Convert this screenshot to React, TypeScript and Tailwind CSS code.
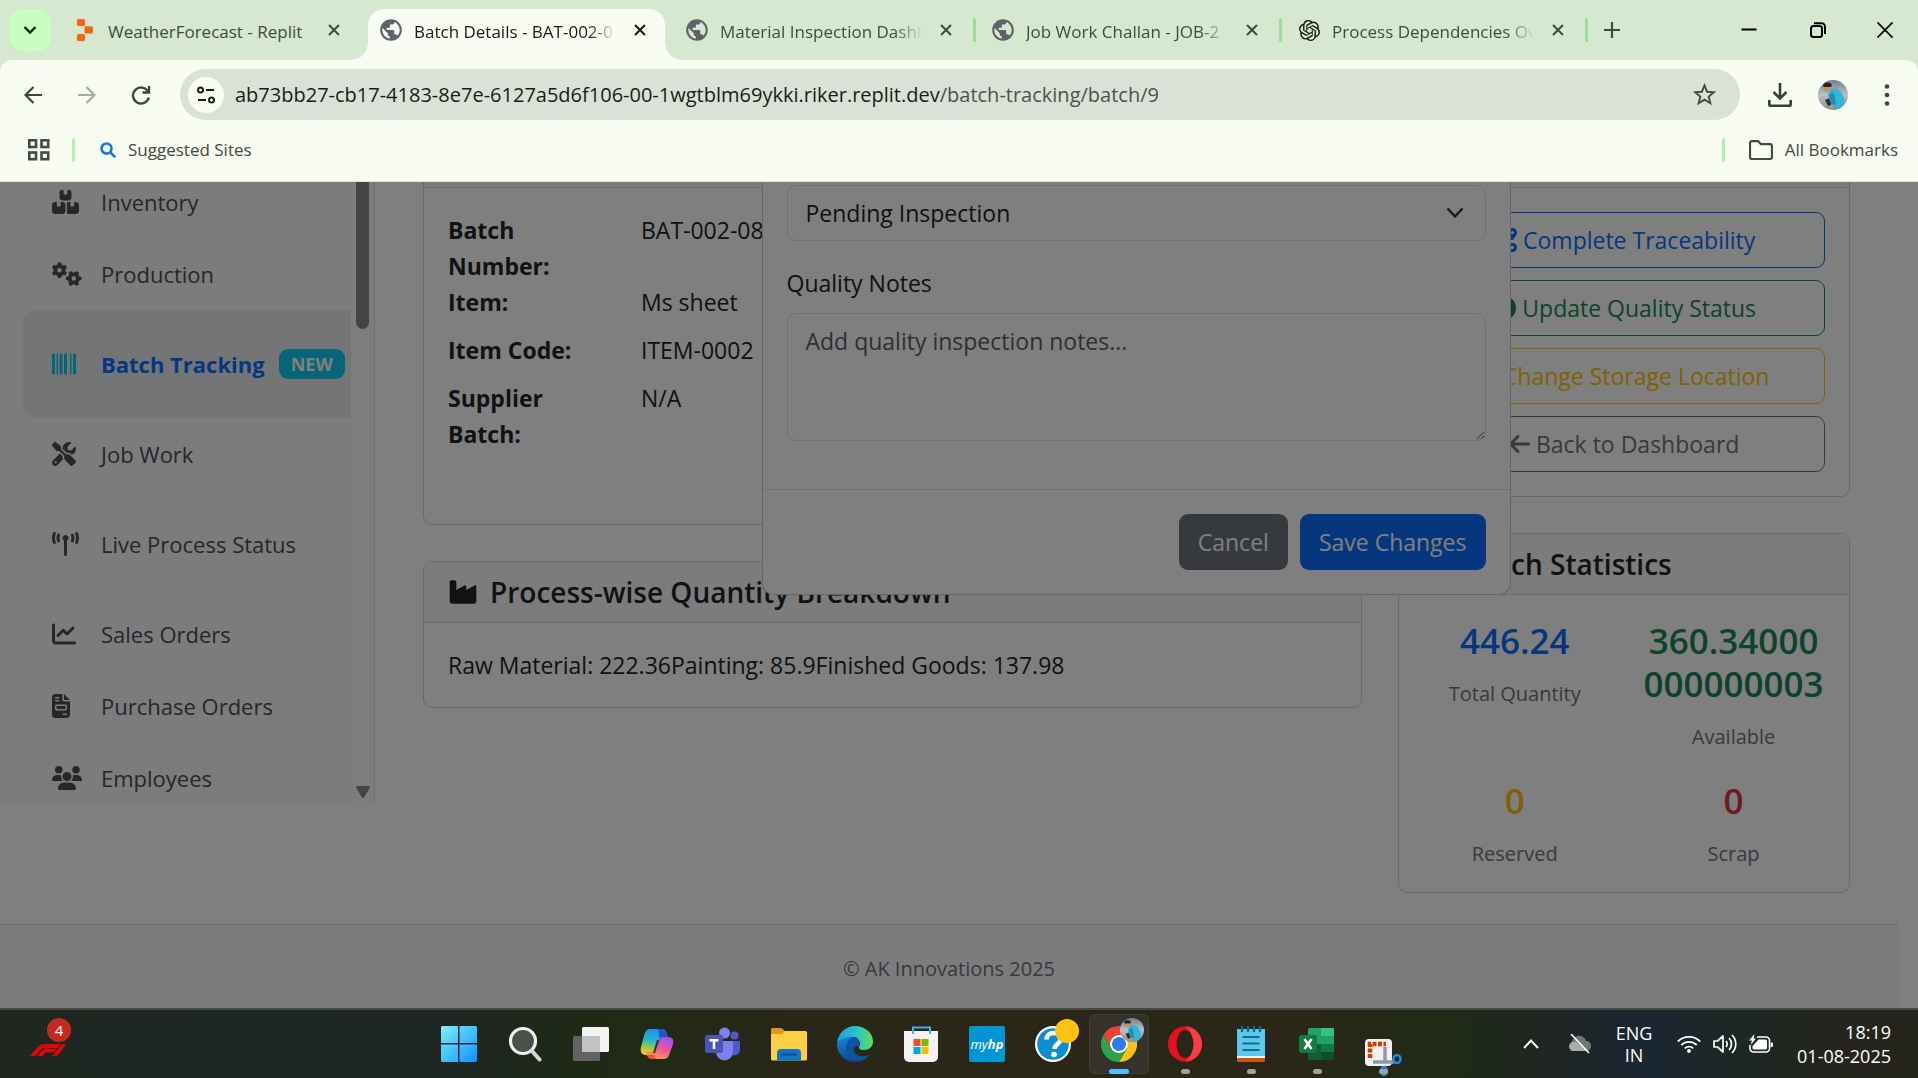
import React from "react";
import {
  FaBoxesStacked,
  FaGears,
  FaBarcode,
  FaScrewdriverWrench,
  FaTowerBroadcast,
  FaChartLine,
  FaFileInvoice,
  FaUsers,
  FaIndustry,
  FaRoute,
  FaCircleCheck,
  FaLocationDot,
  FaArrowLeft,
  FaChartPie,
} from "react-icons/fa6";
import { MdPublic } from "react-icons/md";
import { SiOpenai } from "react-icons/si";

type IconType = React.ComponentType<{ className?: string }>;

/* ---------- Browser chrome ---------- */

function ReplitIcon() {
  return (
    <svg viewBox="0 0 16 22" className="h-[22px] w-4" fill="#f8650c">
      <rect x="0" y="0" width="8" height="7" rx="1.5" />
      <rect x="7.5" y="7.3" width="8.5" height="7.2" rx="1.5" />
      <rect x="0" y="15" width="8" height="7" rx="1.5" />
    </svg>
  );
}

function CrossIcon() {
  return (
    <svg viewBox="0 0 12 12" className="size-3" stroke="currentColor" strokeWidth="2" fill="none">
      <path d="M1 1 11 11M11 1 1 11" />
    </svg>
  );
}

const tabs = [
  { title: "WeatherForecast - Replit", icon: "replit", active: false, divider: false, fade: false },
  { title: "Batch Details - BAT-002-0", icon: "globe", active: true, divider: false, fade: true },
  { title: "Material Inspection Dashb", icon: "globe", active: false, divider: true, fade: true },
  { title: "Job Work Challan - JOB-2", icon: "globe", active: false, divider: true, fade: true },
  { title: "Process Dependencies Ov", icon: "openai", active: false, divider: true, fade: true },
];

function TabStrip() {
  return (
    <div className="flex h-[60px] shrink-0 items-start bg-[#d6e8d0]">
      <button aria-label="Search tabs" className="mt-[9px] ml-[9px] mr-[11px] flex size-[42px] shrink-0 items-center justify-center rounded-[14px] bg-[#c8ffc0] text-[#10200f]">
        <svg viewBox="0 0 14 10" className="h-2.5 w-3.5" fill="none" stroke="currentColor" strokeWidth="2.4">
          <path d="M1.5 2 7 7.5 12.5 2" />
        </svg>
      </button>
      {tabs.map((t) => (
        <div key={t.title} className="relative h-[60px] w-[306px]">
          {t.active && (
            <>
              <div className="absolute top-[9px] bottom-0 left-0 w-[297px] rounded-t-[16px] bg-[#f8fcf2]" />
              <div className="absolute bottom-0 -left-4 size-4 bg-[radial-gradient(circle_at_0_0,transparent_15px,#f8fcf2_16px)]" />
              <div className="absolute bottom-0 left-[297px] size-4 bg-[radial-gradient(circle_at_100%_0,transparent_15px,#f8fcf2_16px)]" />
            </>
          )}
          <div className={t.active ? "relative flex h-[60px] items-center pl-2.5 text-[#171d16]" : "relative flex h-[60px] items-center pl-2.5 text-[#3e4d3b]"}>
            <span className="mr-2.5 flex w-[26px] justify-center text-[#5f6368]">
              {t.icon === "replit" && <ReplitIcon />}
              {t.icon === "globe" && <MdPublic className="size-[26px]" />}
              {t.icon === "openai" && <SiOpenai className="size-[21px] text-[#101410]" />}
            </span>
            <span
              className={
                t.fade
                  ? "w-[202px] overflow-hidden pt-1 text-[17px] leading-6 whitespace-nowrap [mask-image:linear-gradient(to_right,black_86%,transparent)]"
                  : "w-[202px] overflow-hidden pt-1 text-[17px] leading-6 whitespace-nowrap"
              }
            >
              {t.title}
            </span>
            <button aria-label={"Close " + t.title} className="ml-3.5 flex size-5 items-center justify-center">
              <CrossIcon />
            </button>
            {t.divider && <span className="ml-auto mr-1 h-6 w-[3px] rounded bg-[#9cdc96]" />}
          </div>
        </div>
      ))}
      <button aria-label="New tab" className="ml-1 flex h-[60px] w-8 shrink-0 items-center justify-center text-[#3c4c39]">
        <svg viewBox="0 0 16 16" className="size-4" stroke="currentColor" strokeWidth="2.2">
          <path d="M8 0v16M0 8h16" />
        </svg>
      </button>
      <div className="ml-auto flex h-[60px] items-center text-black">
        <button aria-label="Minimize" className="flex w-[69px] justify-center">
          <svg viewBox="0 0 16 16" className="size-4" stroke="currentColor" strokeWidth="2">
            <path d="M0.500 7.500h15" />
          </svg>
        </button>
        <button aria-label="Restore" className="flex w-[69px] justify-center">
          <svg viewBox="0 0 16 16" className="size-4" stroke="currentColor" strokeWidth="2" fill="none">
            <rect x="1" y="4" width="11" height="11" rx="2.5" />
            <path d="M4 1.200h7.500a3.500 3.500 0 0 1 3.500 3.500V12" />
          </svg>
        </button>
        <button aria-label="Close window" className="flex w-[66px] justify-center">
          <svg viewBox="0 0 16 16" className="size-4" stroke="currentColor" strokeWidth="1.800">
            <path d="M0.500 0.500 15.500 15.500M15.500 0.500 0.500 15.500" />
          </svg>
        </button>
      </div>
    </div>
  );
}

function Avatar({ className }: { className: string }) {
  return (
    <svg viewBox="0 0 30 30" className={className}>
      <defs>
        <clipPath id="avatar-clip">
          <circle cx="15" cy="15" r="15" />
        </clipPath>
        <linearGradient id="avatar-sky" x1="0" y1="0" x2="0" y2="1">
          <stop offset="0" stopColor="#6f7d8d" />
          <stop offset="0.5" stopColor="#b9c0ca" />
          <stop offset="1" stopColor="#8e8a8c" />
        </linearGradient>
      </defs>
      <g clipPath="url(#avatar-clip)">
        <rect width="30" height="30" fill="url(#avatar-sky)" />
        <path d="M7 20 14 17l2 7-6 2Z" fill="#2b2e38" />
        <path d="M12 9c7-2 12 3 14 9 1 6-1 9-5 12h-7c1-6-3-9-4-15Z" fill="#2fb6d8" />
        <path d="M14 12c4 4 4 9 3 17l-3 1c1-6-2-10-3-15Z" fill="#1d8fb5" />
        <circle cx="9.500" cy="7.500" r="4.200" fill="#c09072" />
        <path d="M5 6c0-4 8-5 9 0l-2 1H6Z" fill="#2a211d" />
        <path d="m13 24 4 1-1 5h-3Z" fill="#c09072" />
      </g>
    </svg>
  );
}

function Toolbar() {
  return (
    <div className="bg-[#d6e8d0]">
      <div className="flex items-center rounded-t-[12px] bg-[#f8fcf2] pt-[9px] text-[#374a34]">
        <button aria-label="Back" className="ml-[15px] flex w-9 justify-center">
          <svg viewBox="0 0 18 18" className="size-[18px]" fill="none" stroke="currentColor" strokeWidth="2.200">
            <path d="M18 9H1.800M9.500 1 1.500 9l8 8" />
          </svg>
        </button>
        <button aria-label="Forward" className="ml-[18px] flex w-9 justify-center text-[#a3ada0]">
          <svg viewBox="0 0 18 18" className="size-[18px]" fill="none" stroke="currentColor" strokeWidth="2.200">
            <path d="M0 9h16.200M8.500 1l8 8-8 8" />
          </svg>
        </button>
        <button aria-label="Reload" className="ml-[18px] flex w-9 justify-center">
          <svg viewBox="0 0 20 20" className="size-5" fill="none" stroke="currentColor" strokeWidth="2.300">
            <path d="M17.800 12.500A8 8 0 1 1 17 6.500" />
            <path d="M18 1v6.500h-6.500" />
          </svg>
        </button>
        <div className="ml-[21px] flex h-[51px] flex-1 items-center rounded-full bg-[#dae2d7] pl-2">
          <button aria-label="View site information" className="flex size-9 items-center justify-center rounded-full bg-[#f8fcf2] text-[#1a2118]">
            <svg viewBox="0 0 18 18" className="size-[18px]" fill="none" stroke="currentColor" strokeWidth="2">
              <circle cx="3.500" cy="4" r="2.500" />
              <path d="M9 4h8M1 14h8" />
              <circle cx="14.500" cy="14" r="2.500" />
            </svg>
          </button>
          <p className="ml-[11px] flex-1 text-[20px] leading-[30px] text-[#4a5448]">
            <span className="text-[#171d16]">ab73bb27-cb17-4183-8e7e-6127a5d6f106-00-1wgtblm69ykki.riker.replit.dev</span>
            /batch-tracking/batch/9
          </p>
          <button aria-label="Bookmark this tab" className="mr-6 text-[#444d42]">
            <svg viewBox="0 0 24 24" className="size-[23px]" fill="none" stroke="currentColor" strokeWidth="2">
              <path d="m12 2.500 2.700 6.600 7.100.5-5.400 4.600 1.700 6.900L12 17.300l-6.100 3.800 1.700-6.900-5.400-4.600 7.100-.5Z" />
            </svg>
          </button>
        </div>
        <button aria-label="Downloads" className="ml-7 text-[#32452f]">
          <svg viewBox="0 0 24 24" className="size-6" fill="none" stroke="currentColor" strokeWidth="2.600">
            <path d="M12 0v15M5.500 9l6.500 6.500L18.500 9M1.300 17v4.200c0 1 .5 1.500 1.500 1.500h18.400c1 0 1.500-.5 1.500-1.500V17" />
          </svg>
        </button>
        <button aria-label="Profile" className="ml-[26px]">
          <Avatar className="size-[30px]" />
        </button>
        <button aria-label="Menu" className="mr-4 ml-[24px] flex w-[30px] justify-center text-[#374a34]">
          <svg viewBox="0 0 6 22" className="h-[22px] w-1.5" fill="currentColor">
            <circle cx="3" cy="2.500" r="2.300" />
            <circle cx="3" cy="11" r="2.300" />
            <circle cx="3" cy="19.500" r="2.300" />
          </svg>
        </button>
      </div>
    </div>
  );
}

function BookmarksBar() {
  return (
    <div className="flex h-[62px] shrink-0 items-center border-b border-[#dde5d9] bg-[#f8fcf2] pb-0.5 text-[17px] leading-6 text-[#434a41]">
      <button aria-label="Apps" className="ml-7">
        <svg viewBox="0 0 22 22" className="size-[22px]" fill="none" stroke="currentColor" strokeWidth="2.600">
          <rect x="1.300" y="1.300" width="6.700" height="6.700" />
          <rect x="13.500" y="1.300" width="6.700" height="6.700" />
          <rect x="1.300" y="13.500" width="6.700" height="6.700" />
          <rect x="13.500" y="13.500" width="6.700" height="6.700" />
        </svg>
      </button>
      <span className="ml-[22px] h-6 w-[3px] rounded bg-[#b4f0ae]" />
      <a href="#suggested" className="ml-[25px] flex items-center gap-3">
        <svg viewBox="0 0 16 16" className="size-4" fill="none" stroke="#1a78d0" strokeWidth="2.600">
          <circle cx="6.500" cy="6.500" r="5" />
          <path d="m10.200 10.200 5 5" />
        </svg>
        Suggested Sites
      </a>
      <span className="ml-auto h-6 w-[3px] rounded bg-[#b4f0ae]" />
      <button className="mr-5 ml-6 flex items-center gap-3">
        <svg viewBox="0 0 24 20" className="h-5 w-6" fill="none" stroke="currentColor" strokeWidth="2.200">
          <path d="M3 1.200h6l3 3h9a2 2 0 0 1 2 2V17a2 2 0 0 1-2 2H3a2 2 0 0 1-2-2V3.200a2 2 0 0 1 2-2Z" />
        </svg>
        All Bookmarks
      </button>
    </div>
  );
}

/* ---------- Application page ---------- */

const navItems: { label: string; icon: IconType; size: string; tall?: boolean; active?: boolean }[] = [
  { label: "Inventory", icon: FaBoxesStacked, size: "h-6 w-[27px]" },
  { label: "Production", icon: FaGears, size: "h-6 w-[30px]" },
  { label: "Batch Tracking", icon: FaBarcode, size: "size-6 text-[#0dcaf0]", tall: true, active: true },
  { label: "Job Work", icon: FaScrewdriverWrench, size: "size-6" },
  { label: "Live Process Status", icon: FaTowerBroadcast, size: "h-6 w-[27px]", tall: true },
  { label: "Sales Orders", icon: FaChartLine, size: "size-6" },
  { label: "Purchase Orders", icon: FaFileInvoice, size: "h-6 w-[18px]" },
  { label: "Employees", icon: FaUsers, size: "h-6 w-[30px]" },
];

function Sidebar() {
  return (
    <aside className="flex h-[621px] w-[375px] shrink-0 overflow-hidden border-r border-[#dee2e6] bg-[#fbfbfb]">
      <nav className="flex-1 bg-[#f8f9fa] pl-[23px]">
        <ul className="-mt-4">
          {navItems.map(({ label, icon: Icon, size, tall, active }) => (
            <li key={label}>
              <a
                href={"#" + label.toLowerCase().replace(/ /g, "-")}
                className={
                  active
                    ? "flex h-[108px] items-center rounded-l-[12px] bg-[#e8eaed] pl-[29px] font-bold text-[#0d6efd]"
                    : tall
                      ? "flex h-[108px] items-center pl-[29px] text-[#495057]"
                      : "flex h-[72px] items-center pl-[29px] text-[#495057]"
                }
              >
                <span className="w-[49px] shrink-0">
                  <Icon className={size} />
                </span>
                <span className="whitespace-nowrap">{label}</span>
                {active && (
                  <span className="ml-3.5 rounded-[9px] bg-[#0dcaf0] px-3 text-[18px] leading-[30px] font-bold text-white">NEW</span>
                )}
              </a>
            </li>
          ))}
        </ul>
      </nav>
      <div className="flex w-[23px] flex-col items-center">
        <div className="h-[147px] w-[13px] rounded-b-full bg-[#888888]" />
        <svg viewBox="0 0 14 12" className="mt-auto mb-[5px] h-3 w-3.5" fill="#888888">
          <path d="M1.500 0h11c1.300 0 1.800 1 1.200 2L8.300 11c-.7 1.200-1.900 1.200-2.600 0L.3 2C-.3 1 .2 0 1.500 0Z" />
        </svg>
      </div>
    </aside>
  );
}

const details = [
  ["Batch Number:", "BAT-002-08"],
  ["Item:", "Ms sheet"],
  ["Item Code:", "ITEM-0002"],
  ["Supplier Batch:", "N/A"],
];

function BatchInfoCard() {
  return (
    <section className="h-[343px] rounded-b-[9px] border border-t-0 border-[#d3d3d3]">
      <div className="h-[6px] border-b border-[#d3d3d3] bg-[#f8f8f8]" />
      <dl className="w-1/2 px-6 pt-6">
        {details.map(([k, v]) => (
          <div key={k} className="flex">
            <dt className="w-[193px] shrink-0 pr-9 font-bold">{k}</dt>
            <dd className="mb-3 whitespace-nowrap">{v}</dd>
          </div>
        ))}
      </dl>
    </section>
  );
}

function CardHeader({ icon: Icon, children }: { icon: IconType; children: React.ReactNode }) {
  return (
    <h2 className="flex items-center gap-3 rounded-t-[8px] border-b border-[#d3d3d3] bg-[#f8f8f8] px-6 py-3 text-[28px] leading-9 font-semibold">
      <Icon className="size-[30px]" />
      {children}
    </h2>
  );
}

function ProcessCard() {
  return (
    <section className="mt-9 rounded-[9px] border border-[#d3d3d3]">
      <CardHeader icon={FaIndustry}>Process-wise Quantity Breakdown</CardHeader>
      <p className="p-6">Raw Material: 222.36Painting: 85.9Finished Goods: 137.98</p>
    </section>
  );
}

const actions: { label: string; icon: IconType; size: string; style: string }[] = [
  { label: "Complete Traceability", icon: FaRoute, size: "size-6", style: "border-[#0d6efd] text-[#0d6efd]" },
  { label: "Update Quality Status", icon: FaCircleCheck, size: "size-6", style: "border-[#198754] text-[#198754]" },
  { label: "Change Storage Location", icon: FaLocationDot, size: "h-6 w-[18px]", style: "border-[#ffc107] text-[#ffc107]" },
  { label: "Back to Dashboard", icon: FaArrowLeft, size: "h-6 w-[21px]", style: "border-[#6c757d] text-[#6c757d]" },
];

function ActionsCard() {
  return (
    <section className="rounded-b-[9px] border border-t-0 border-[#d3d3d3]">
      <div className="h-[6px] border-b border-[#d3d3d3] bg-[#f8f8f8]" />
      <div className="flex flex-col gap-3 p-6">
        {actions.map(({ label, icon: Icon, size, style }) => (
          <button key={label} className={"flex h-14 items-center justify-center gap-1.5 rounded-[9px] border " + style}>
            <Icon className={size} />
            {label}
          </button>
        ))}
      </div>
    </section>
  );
}

const stats = [
  { value: "446.24", label: "Total Quantity", style: "text-[#0d6efd]" },
  { value: "360.34000000000003", label: "Available", style: "text-[#198754]" },
  { value: "0", label: "Reserved", style: "text-[#ffc107]" },
  { value: "0", label: "Scrap", style: "text-[#dc3545]" },
];

function StatsCard() {
  return (
    <section className="mt-9 rounded-[9px] border border-[#d3d3d3]">
      <CardHeader icon={FaChartPie}>Batch Statistics</CardHeader>
      <div className="grid grid-cols-2 gap-x-9 gap-y-6 px-6 pt-6 pb-5 text-center">
        {stats.map((s) => (
          <div key={s.label} className="min-w-0">
            <p className={"mb-3.5 text-[35px] leading-[43px] font-semibold break-words " + s.style}>{s.value}</p>
            <p className="text-[20px] leading-9 text-[#6c757d]">{s.label}</p>
          </div>
        ))}
      </div>
    </section>
  );
}

function QualityModal() {
  return (
    <div role="dialog" aria-label="Update Quality Status" className="mr-px w-[749px] rounded-b-[12px] border border-t-0 border-[#cccccc] bg-white">
      <form className="px-6 pt-[3px] pb-12" onSubmit={(e) => e.preventDefault()}>
        <div className="relative">
          <select aria-label="Quality Status" className="h-14 w-full appearance-none rounded-[9px] border border-[#dee2e6] bg-white px-[18px]">
            <option>Pending Inspection</option>
          </select>
          <svg viewBox="0 0 18 12" className="pointer-events-none absolute top-[22px] right-[22px] h-3 w-[18px]" fill="none" stroke="#343a40" strokeWidth="2.500">
            <path d="m1.500 1.500 7.500 8 7.500-8" />
          </svg>
        </div>
        <label htmlFor="notes" className="mt-6 mb-3 block">
          Quality Notes
        </label>
        <textarea
          id="notes"
          placeholder="Add quality inspection notes..."
          className="block h-32 w-full rounded-[9px] border border-[#dee2e6] bg-white px-[18px] py-[9px] placeholder:text-[#5c6166]"
        />
      </form>
      <div className="flex justify-end gap-3 border-t border-[#dee2e6] p-6 text-white">
        <button className="h-14 rounded-[9px] bg-[#6c757d] px-[19px]">Cancel</button>
        <button className="h-14 rounded-[9px] bg-[#0d6efd] px-[19px]">Save Changes</button>
      </div>
    </div>
  );
}

function AppPage() {
  return (
    <div className="relative min-h-0 flex-1 overflow-hidden bg-white pr-5 text-[22px] leading-9 text-[#212529]">
      <div className="flex min-h-[742px]">
        <Sidebar />
        <main className="relative min-w-0 flex-1 px-12 text-[23px]">
          <div className="-mx-[18px] flex">
            <div className="w-2/3 px-[18px]">
              <BatchInfoCard />
              <ProcessCard />
            </div>
            <div className="w-1/3 px-[18px]">
              <ActionsCard />
              <StatsCard />
            </div>
          </div>
          <div className="absolute inset-x-0 top-0 flex justify-center">
            <QualityModal />
          </div>
        </main>
      </div>
      <footer className="h-24 border-t border-[#dee2e6] bg-[#f8f9fa] pt-[26px] text-center text-[20px] text-[#6c757d]">
        © AK Innovations 2025
      </footer>
      <div className="absolute inset-0 bg-black/50" />
    </div>
  );
}

/* ---------- Windows taskbar ---------- */

const box = "size-9";

function StartIcon() {
  return (
    <svg viewBox="0 0 36 36" className={box}>
      <defs>
        <linearGradient id="win" x1="0" y1="0" x2="1" y2="1" >
          <stop offset="0" stopColor="#7df0ff" />
          <stop offset="1" stopColor="#0a93ff" />
        </linearGradient>
      </defs>
      <path fill="url(#win)" d="M1.500 0H17v17H0V1.500A1.500 1.500 0 0 1 1.500 0ZM18.500 0H34.500A1.500 1.500 0 0 1 36 1.500V17H18.500ZM0 18.500H17V36H1.500A1.500 1.500 0 0 1 0 34.500ZM18.500 18.500H36v16a1.500 1.500 0 0 1-1.500 1.500H18.500Z" />
    </svg>
  );
}

function SearchIcon() {
  return (
    <svg viewBox="0 0 36 36" className={box} fill="none">
      <circle cx="16" cy="15" r="12.500" fill="#46524a" stroke="#f1f1f1" strokeWidth="3.200" />
      <path d="m25 25 7.500 8.500" stroke="#d8d8d8" strokeWidth="4" strokeLinecap="round" />
    </svg>
  );
}

function TaskViewIcon() {
  return (
    <svg viewBox="0 0 36 36" className={box}>
      <rect x="0" y="10" width="27" height="25" rx="1.500" fill="#636163" />
      <rect x="9" y="1" width="27" height="25" rx="1.500" fill="#f4f4f4" />
      <path d="M9 10h18v16H10.500A1.500 1.500 0 0 1 9 24.500Z" fill="#c2c2c2" />
    </svg>
  );
}

function CopilotIcon() {
  return (
    <svg viewBox="0 0 36 36" className={box}>
      <defs>
        <linearGradient id="cp-a" x1="0.500" y1="0" x2="0.300" y2="1">
          <stop offset="0" stopColor="#1d8df0" />
          <stop offset="0.450" stopColor="#27b6c8" />
          <stop offset="0.750" stopColor="#a8c83a" />
          <stop offset="1" stopColor="#ffc52b" />
        </linearGradient>
        <linearGradient id="cp-b" x1="0.700" y1="0" x2="0.300" y2="1">
          <stop offset="0" stopColor="#a24df0" />
          <stop offset="0.500" stopColor="#e8599c" />
          <stop offset="1" stopColor="#ff9a4a" />
        </linearGradient>
      </defs>
      <path d="M11 3h12c3 0 4 2 5 5l1 4h-5c-3 0-4 1-5 4l-3 9c-1 3-2 4-5 4H7c-5 0-6-4-5-8L5.500 8C6.500 5 8 3 11 3Z" fill="url(#cp-a)" />
      <path d="M19 3h4c3 0 4 2 5 5l1 4h-6c-3 0-3-1-3-4s-.5-4-1-5Z" fill="#1c56c8" />
      <path d="M25 33H13c-3 0-4-2-5-4l-1-3h5c3 0 4-1 5-4l3-7c1-3 2-4 5-4h4c5 0 6 3 5 7l-3.500 10C29.500 31 28 33 25 33Z" fill="url(#cp-b)" />
      <path d="M17 33h-4c-3 0-4-2-5-4H12c3 0 4 0 4 2Z" fill="#f2512b" />
      <path d="m20 14-4 13h-2l4-13Z" fill="#3b2a4a" />
    </svg>
  );
}

function TeamsIcon() {
  return (
    <svg viewBox="0 0 36 36" className={box}>
      <circle cx="29.500" cy="9.500" r="4" fill="#5059c9" />
      <path d="M25 15h10v9a5.500 5.500 0 0 1-10 3Z" fill="#5059c9" />
      <circle cx="19.500" cy="7" r="5.500" fill="#7b83eb" />
      <path d="M11 15h17v11a8.500 8.500 0 0 1-17 0Z" fill="#7b83eb" />
      <rect x="0" y="9" width="18" height="18" rx="2" fill="#4b53bc" />
      <path d="M4.500 13h9v2.500h-3.200V23H7.700v-7.500H4.500Z" fill="#fff" />
    </svg>
  );
}

function ExplorerIcon() {
  return (
    <svg viewBox="0 0 36 36" className={box}>
      <path d="M1.500 2h9l4 3.500V14H0V3.500A1.500 1.500 0 0 1 1.500 2Z" fill="#dd9a0c" />
      <path d="M14 5h20.500A1.500 1.500 0 0 1 36 6.500V33a1.500 1.500 0 0 1-1.500 1.500h-33A1.500 1.500 0 0 1 0 33V8h11Z" fill="#ffcf45" />
      <path d="M6 34.500V27a4 4 0 0 1 4-4h16a4 4 0 0 1 4 4v7.500Z" fill="#0f75c8" />
      <path d="M11 28.500h14" stroke="#0a4a88" strokeWidth="2" strokeLinecap="round" />
    </svg>
  );
}

function EdgeIcon() {
  return (
    <svg viewBox="0 0 36 36" className={box}>
      <defs>
        <linearGradient id="edge-a" x1="0" y1="0.500" x2="1" y2="0.500">
          <stop offset="0" stopColor="#1e9de0" />
          <stop offset="0.550" stopColor="#2cc3c8" />
          <stop offset="1" stopColor="#62e050" />
        </linearGradient>
        <linearGradient id="edge-b" x1="0" y1="0" x2="0.600" y2="1">
          <stop offset="0" stopColor="#1a86dc" />
          <stop offset="1" stopColor="#0c3f8a" />
        </linearGradient>
      </defs>
      <path d="M0 18a18 18 0 0 0 18 18c6 0 11-2.500 14.500-7-8 4-16 1-17-6-.5-4 1-7 4-9C12 8 2 10 0 18Z" fill="url(#edge-b)" />
      <path d="M0 17C1 7 9 0 18 0c10 0 18 7 18 15.500C36 21 32 24 27 24c-4 0-6-1.500-5-3 3-5-1-10-7-10S2 13 0 17Z" fill="url(#edge-a)" />
      <path d="M9 22c0-6 4-10 9-11 3 1 5 4 5 7 0 1-.5 2-1 3-2-2-4-1-5 1-1 7 6 10 15.500 7C27 38 9 36 9 22Z" fill="#10539f" />
    </svg>
  );
}

function StoreIcon() {
  return (
    <svg viewBox="0 0 36 36" className={box}>
      <path d="M10 8V1.500h17V8" fill="none" stroke="#34b4f0" strokeWidth="2" />
      <path d="M1 5h34v26a5 5 0 0 1-5 5H6a5 5 0 0 1-5-5Z" fill="#f3f3f3" />
      <path d="M10 8V5M27 8V5" stroke="#34b4f0" strokeWidth="2" />
      <rect x="10.500" y="13" width="7" height="7" fill="#f25022" />
      <rect x="18.500" y="13" width="7" height="7" fill="#7fba00" />
      <rect x="10.500" y="21" width="7" height="7" fill="#00a4ef" />
      <rect x="18.500" y="21" width="7" height="7" fill="#ffb900" />
    </svg>
  );
}

function MyHpIcon() {
  return (
    <span className="flex size-9 items-center justify-center rounded-[2px] bg-[#0096d6] text-[13px] leading-4 text-white italic">
      my<b>hp</b>
    </span>
  );
}

function HelpIcon() {
  return (
    <svg viewBox="0 0 36 36" className="size-9 overflow-visible">
      <circle cx="18" cy="18" r="18" fill="#fff" />
      <circle cx="18" cy="18" r="15.800" fill="#0b8fd2" />
      <path d="M11.500 13.500c0-4 3-6.500 7-6.500s7 2.500 7 6c0 5-6 5-6 10" fill="none" stroke="#fff" strokeWidth="4.500" />
      <circle cx="19" cy="28.500" r="2.800" fill="#fff" />
      <circle cx="32" cy="5" r="12" fill="#ffc20e" />
    </svg>
  );
}

function ChromeIcon() {
  return (
    <svg viewBox="0 0 36 36" className={box}>
      <path d="M18 9h15.600a18 18 0 0 1-15.600 27l7.800-13.500Z" fill="#fbc116" />
      <path d="M18 9h15.600A18 18 0 0 0 2.400 9l7.800 13.500Z" fill="#ea4335" />
      <path d="M2.400 9A18 18 0 0 0 18 36l7.800-13.500H10.200Z" fill="#2fa24c" />
      <circle cx="18" cy="18" r="9" fill="#fff" />
      <circle cx="18" cy="18" r="7" fill="#2b7de9" />
    </svg>
  );
}

function OperaIcon() {
  return (
    <svg viewBox="0 0 36 36" className={box}>
      <ellipse cx="18" cy="18" rx="17" ry="17.500" fill="#e8101f" />
      <path d="M18 0.500c9.400 0 17 7.800 17 17.500s-7.600 17.500-17 17.500c4.500-2 8-9 8-17.500S22.500 2.500 18 .5Z" fill="#fb3a44" />
      <ellipse cx="18" cy="18" rx="8.500" ry="14" fill="#2a2718" />
    </svg>
  );
}

function NotepadIcon() {
  return (
    <svg viewBox="0 0 36 36" className={box}>
      <rect x="4" y="30" width="28" height="6" rx="1.500" fill="#c8590f" />
      <path d="M4 4h28v28H4Z" fill="#f2f2f2" />
      <path d="M4 3h28v27H4Z" fill="#5fc8e8" />
      <path d="M9 0v5M15 0v5M21 0v5M27 0v5" stroke="#0b6c96" strokeWidth="2.400" strokeLinecap="round" />
      <path d="M9.500 11h17M9.500 17.500h17M9.500 24h17" stroke="#0b6c96" strokeWidth="2" />
    </svg>
  );
}

function ExcelIcon() {
  return (
    <svg viewBox="0 0 36 36" className={box}>
      <rect x="9" y="2" width="26" height="32" rx="1.500" fill="#21a366" />
      <path d="M22 2h11.500A1.500 1.500 0 0 1 35 3.500V10H22Z" fill="#33c481" />
      <path d="M9 18h13v16H10.500A1.500 1.500 0 0 1 9 32.500Z" fill="#185c37" />
      <path d="M22 18h13v14.500a1.500 1.500 0 0 1-1.500 1.500H22Z" fill="#134d2f" />
      <path d="M22 18h13v8H22Z" fill="#107c41" />
      <rect x="0" y="9" width="18" height="18" rx="2" fill="#107c41" />
      <path d="m5.500 13 7 10M12.500 13l-7 10" stroke="#fff" strokeWidth="2.600" />
    </svg>
  );
}

function SnipIcon() {
  return (
    <svg viewBox="0 -8 36 36" className="size-9 overflow-visible">
      <rect x="0" y="5" width="27" height="27" rx="4" fill="#f1f1f1" />
      <path d="M5 24v-14h16" fill="none" stroke="#d83b01" strokeWidth="4.500" strokeDasharray="4 1.500" />
      <path d="M20 13v16M8 28h21" fill="none" stroke="#8e9aa5" strokeWidth="3.500" />
      <ellipse cx="32" cy="25" rx="3.500" ry="4" fill="none" stroke="#1590e8" strokeWidth="2.500" />
      <ellipse cx="19" cy="37" rx="3" ry="4" fill="none" stroke="#1590e8" strokeWidth="2.500" />
    </svg>
  );
}

const taskbarApps: { name: string; icon: React.ComponentType; running?: boolean; focused?: boolean }[] = [
  { name: "Start", icon: StartIcon },
  { name: "Search", icon: SearchIcon },
  { name: "Task View", icon: TaskViewIcon },
  { name: "Copilot", icon: CopilotIcon },
  { name: "Teams", icon: TeamsIcon },
  { name: "File Explorer", icon: ExplorerIcon },
  { name: "Edge", icon: EdgeIcon },
  { name: "Store", icon: StoreIcon },
  { name: "myHP", icon: MyHpIcon },
  { name: "HP Support", icon: HelpIcon },
  { name: "Chrome", icon: ChromeIcon, focused: true },
  { name: "Opera", icon: OperaIcon, running: true },
  { name: "Notepad", icon: NotepadIcon, running: true },
  { name: "Excel", icon: ExcelIcon, running: true },
  { name: "Snipping Tool", icon: SnipIcon, running: true },
];

function Taskbar() {
  return (
    <div className="flex h-[70px] shrink-0 items-center border-t-2 border-[#454a45] bg-[linear-gradient(to_right,#1f271f_0%,#1c2624_14%,#1e2620_25%,#1e2a16_30%,#2a2718_42%,#2a2718_68%,#1f2a17_76%,#1e2524_81%,#1a2632_86%,#1d2723_91%,#25241d_96%)] text-white">
      <div className="w-[426px] shrink-0">
        <button aria-label="Widgets, 4 notifications" className="relative ml-[30px] flex h-12 w-12 items-center">
          <svg viewBox="0 0 36 12" className="mt-3 h-3 w-9" fill="#e10600">
            <path d="M0 12 7.500 3.500C9.500 1 11 0 14 0h17l-3.500 4H15c-2 0-3 .5-4 1.700L5.500 12Z" />
            <path d="M7.500 12 12 6.800C13 5.500 14 5 16 5h10.500l-3 3.500H16.500c-1 0-1.500.2-2 .8L12.300 12ZM22 12 32 0h4.500L27 12Z" />
          </svg>
          <span className="absolute -top-0.5 left-[17px] flex size-6 items-center justify-center rounded-full bg-[#c42b1c] text-[15px] leading-5">4</span>
        </button>
      </div>
      <div className="flex h-full">
        {taskbarApps.map(({ name, icon: Icon, running, focused }) => (
          <button key={name} aria-label={name} className="relative flex h-full w-[66px] items-center justify-center">
            {focused && <span className="absolute top-1 left-[3px] h-[60px] w-[60px] rounded-[6px] border border-[#403e31] bg-[#34322a]" />}
            <span className="relative">
              <Icon />
            </span>
            {focused && (
              <span className="absolute top-2 right-2">
                <Avatar className="size-6" />
              </span>
            )}
            {focused && <span className="absolute bottom-1 h-[5px] w-5 rounded-full bg-[#4cc2ff]" />}
            {running && <span className="absolute bottom-1 h-[5px] w-[9px] rounded-full bg-[#a3a19a]" />}
          </button>
        ))}
      </div>
      <div className="mr-[27px] ml-auto flex items-center text-[18px] leading-6">
        <button aria-label="Show hidden icons" className="mr-7">
          <svg viewBox="0 0 16 10" className="h-2.5 w-4" fill="none" stroke="currentColor" strokeWidth="2">
            <path d="m1 9 7-7.500L15 9" />
          </svg>
        </button>
        <svg viewBox="0 0 24 20" className="mr-6 h-5 w-6">
          <path d="M5 17a5 5 0 0 1 0-9c1-5 6-8 11-5 2 1 3 3 3 4 3 0 5 2 5 5s-2 5-5 5Z" fill="#70756f" />
          <path d="M5 17a5 5 0 0 1 0-9l4-.5 11 9.500Z" fill="#a9aca8" />
          <path d="m4 0 18 19" stroke="#fff" strokeWidth="1.600" />
        </svg>
        <span className="mr-6 w-[38px] text-center leading-[22px]">
          ENG
          <br />
          IN
        </span>
        <svg viewBox="0 0 24 18" className="mr-3 h-[18px] w-6" fill="none" stroke="currentColor" strokeWidth="1.800">
          <path d="M.8 6.500a16 16 0 0 1 22.400 0M4.300 10a11 11 0 0 1 15.400 0M7.800 13.300a6 6 0 0 1 8.400 0" />
          <circle cx="12" cy="16" r="1.900" fill="currentColor" stroke="none" />
        </svg>
        <svg viewBox="0 0 24 20" className="mr-3 h-5 w-6" fill="none" stroke="currentColor" strokeWidth="1.700">
          <path d="M1 7v6h3.500l5.500 5V2L4.500 7Z" strokeLinejoin="round" />
          <path d="M13 7c1.500 1.500 1.500 4.500 0 6M16 4c3.300 3.300 3.300 8.700 0 12M19 1c5 5 5 13 0 18" />
        </svg>
        <svg viewBox="0 0 24 20" className="mr-6 h-5 w-6" fill="none" stroke="currentColor" strokeWidth="1.600">
          <path d="M8 3h9a3.500 3.500 0 0 1 3.500 3.500v8A3.500 3.500 0 0 1 17 18H4.500A3.500 3.500 0 0 1 1 14.500V11" />
          <path d="M9.500 5.500h7A1.500 1.500 0 0 1 18 7v7a1.500 1.500 0 0 1-1.500 1.500H5A1.500 1.500 0 0 1 3.500 14v-2ZM21.500 8.500h1.500a1 1 0 0 1 1 1V12a1 1 0 0 1-1 1h-1.500Z" fill="currentColor" stroke="none" />
          <path d="M5.500 0 0 6.500h3L1.500 11 7 4.500H4.500Z" fill="currentColor" stroke="none" />
        </svg>
        <p className="text-right">
          18:19
          <br />
          01-08-2025
        </p>
      </div>
    </div>
  );
}

export default function App() {
  return (
    <div className="flex h-screen flex-col overflow-hidden bg-[#f8fcf2] font-['Open_Sans','Noto_Sans',sans-serif]">
      <TabStrip />
      <Toolbar />
      <BookmarksBar />
      <AppPage />
      <Taskbar />
    </div>
  );
}
